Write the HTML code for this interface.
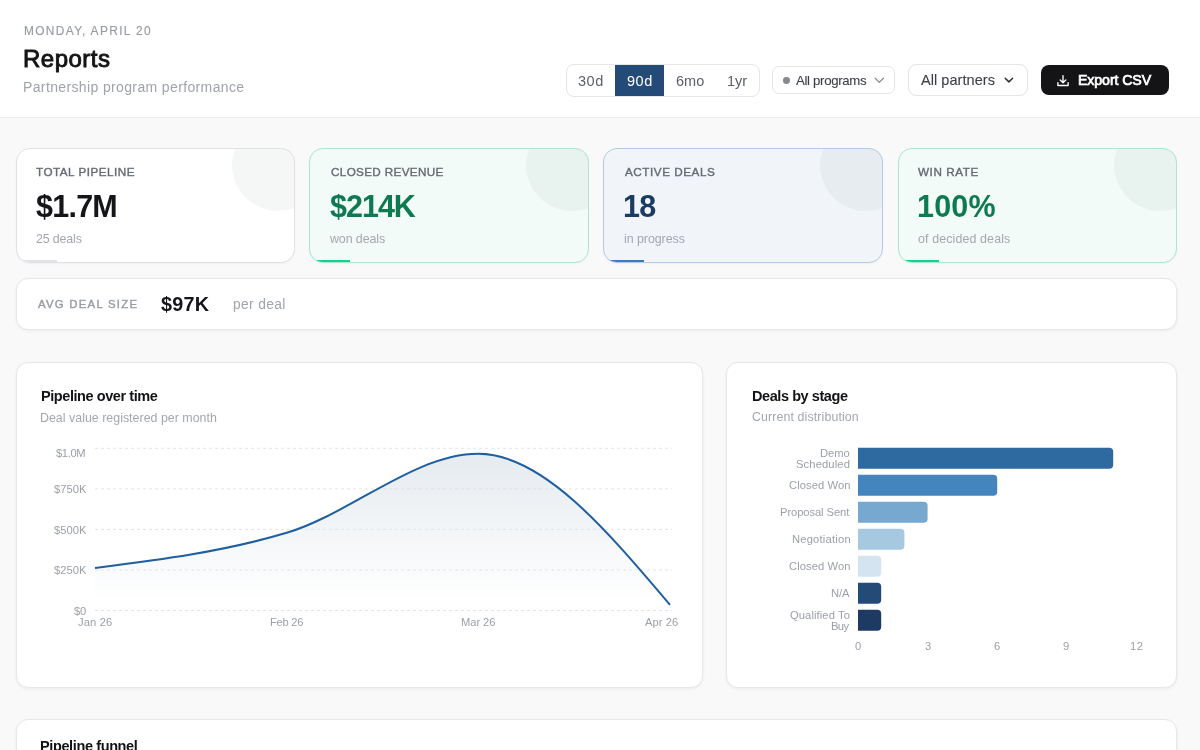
<!DOCTYPE html>
<html><head><meta charset="utf-8"><title>Reports</title>
<style>
html,body{margin:0;padding:0;}
body{width:1200px;height:750px;overflow:hidden;position:relative;background:#f9f9fa;font-family:"Liberation Sans",sans-serif;}
.abs{position:absolute;}
.t{position:absolute;white-space:nowrap;line-height:1;will-change:transform;}
.header{position:absolute;left:0;top:0;width:1200px;height:118px;background:#ffffff;border-bottom:1px solid #efeff1;box-sizing:border-box;}
.seg{position:absolute;left:565.5px;top:64.2px;width:194.5px;height:32.6px;border:1px solid #e4e6e9;border-radius:8px;box-sizing:border-box;background:#fff;overflow:hidden;}
.seg .on{position:absolute;left:48.6px;top:0;width:49.2px;height:100%;background:#244a78;}
.dd{position:absolute;border:1px solid #e4e6e9;background:#fff;box-sizing:border-box;}
.btn{position:absolute;left:1040.6px;top:64.9px;width:128.2px;height:30.6px;background:#141416;border-radius:8px;}
.kpi{position:absolute;top:147.8px;height:114.9px;border-radius:14px;box-sizing:border-box;border:1px solid #dfe1e5;overflow:hidden;background:#fff;box-shadow:0 1px 2px rgba(16,24,40,0.04);}
.kpi .circ{position:absolute;width:92px;height:92px;border-radius:50%;top:-30px;right:-30px;background:rgba(30,35,45,0.045);}
.kpi .bar{position:absolute;left:0;bottom:0;width:40px;height:2.2px;}
.card{position:absolute;background:#fff;border:1px solid #e5e7ea;box-sizing:border-box;box-shadow:0 1px 3px rgba(16,24,40,0.06);}
</style></head>
<body>
<div class="header"></div>
<div class="seg"><div class="on"></div></div>
<div class="dd" style="left:772.2px;top:66.4px;width:122.8px;height:28px;border-radius:7px;"></div>
<div class="abs" style="left:782.8px;top:77.4px;width:6.8px;height:6.8px;border-radius:50%;background:#85888e;"></div>
<div class="dd" style="left:908px;top:64.4px;width:120.4px;height:32.1px;border-radius:8px;"></div>
<div class="btn"></div>
<svg class="abs" style="left:0;top:0" width="1200" height="120"><path d="M875.2 78.3 L879.3 82.4 L883.4 78.2" fill="none" stroke="#8a8d93" stroke-width="1.3" stroke-linecap="round" stroke-linejoin="round"/><path d="M1005.2 78.3 L1008.9 81.9 L1012.6 78.3" fill="none" stroke="#2f3136" stroke-width="1.5" stroke-linecap="round" stroke-linejoin="round"/></svg>
<svg class="abs" style="left:1055px;top:73px" width="16" height="16" viewBox="0 0 16 16"><path d="M8 2.6 V9.6 M5.2 7 L8 9.8 L10.8 7 M2.9 9.6 V12.5 H13.1 V9.6" fill="none" stroke="#fff" stroke-width="1.35" stroke-linecap="round" stroke-linejoin="round"/></svg>

<div class="kpi" style="left:16px;width:279px;"><div class="circ"></div><div class="bar" style="background:#e1e3e7"></div></div>
<div class="kpi" style="left:309.3px;width:279.7px;background:#f2fbf7;border-color:#ace9ca;"><div class="circ"></div><div class="bar" style="background:#14d18e"></div></div>
<div class="kpi" style="left:603.2px;width:279.8px;background:#f1f5fa;border-color:#b3cce6;"><div class="circ"></div><div class="bar" style="background:#3b7bbf"></div></div>
<div class="kpi" style="left:897.5px;width:279.7px;background:#f2fbf7;border-color:#ace9ca;"><div class="circ"></div><div class="bar" style="background:#14d18e"></div></div>

<div class="card" style="left:16px;top:277.8px;width:1161px;height:52.4px;border-radius:12px;"></div>
<div class="card" style="left:16px;top:361.9px;width:687px;height:326px;border-radius:12px;"></div>
<div class="card" style="left:726.4px;top:361.9px;width:450.4px;height:326px;border-radius:12px;"></div>
<div class="card" style="left:16px;top:719.2px;width:1161px;height:200px;border-radius:12px;"></div>
<svg class="abs" width="1200" height="750" style="left:0;top:0">
<defs><linearGradient id="ag" gradientUnits="userSpaceOnUse" x1="0" y1="452" x2="0" y2="610.5">
<stop offset="0.05" stop-color="#d8e0e7" stop-opacity="0.62"/>
<stop offset="0.95" stop-color="#d8e0e7" stop-opacity="0"/>
</linearGradient></defs>
<g font-family="Liberation Sans" font-size="11.6" fill="#9ca0a8"><line x1="95.0" y1="448.30" x2="672.0" y2="448.30" stroke="#e3e5e9" stroke-width="1" stroke-dasharray="3 3"/><line x1="95.0" y1="488.85" x2="672.0" y2="488.85" stroke="#e3e5e9" stroke-width="1" stroke-dasharray="3 3"/><line x1="95.0" y1="529.40" x2="672.0" y2="529.40" stroke="#e3e5e9" stroke-width="1" stroke-dasharray="3 3"/><line x1="95.0" y1="569.95" x2="672.0" y2="569.95" stroke="#e3e5e9" stroke-width="1" stroke-dasharray="3 3"/><line x1="95.0" y1="610.50" x2="672.0" y2="610.50" stroke="#e3e5e9" stroke-width="1" stroke-dasharray="3 3"/></g>
<path d="M95.00,568.00C158.89,559.92,222.78,551.84,286.67,532.81C350.56,513.77,414.44,453.81,478.33,453.81C542.22,453.81,606.11,529.32,670.00,604.82L670.00,610.50L95.00,610.50Z" fill="url(#ag)" stroke="none"/>
<path d="M95.00,568.00C158.89,559.92,222.78,551.84,286.67,532.81C350.56,513.77,414.44,453.81,478.33,453.81C542.22,453.81,606.11,529.32,670.00,604.82" fill="none" stroke="#1f5f9f" stroke-width="2"/>
</svg>
<svg class="abs" width="1200" height="750" style="left:0;top:0">
<g font-family="Liberation Sans" font-size="11.6" fill="#9ca0a8"><path d="M858.0,447.7H1109.2Q1113.2,447.7 1113.2,451.7V464.7Q1113.2,468.7 1109.2,468.7H858.0Z" fill="#2e6aa0"/><path d="M858.0,474.7H993.2Q997.2,474.7 997.2,478.7V491.7Q997.2,495.7 993.2,495.7H858.0Z" fill="#4585be"/><path d="M858.0,501.7H923.6Q927.6,501.7 927.6,505.7V518.7Q927.6,522.7 923.6,522.7H858.0Z" fill="#77a8d0"/><path d="M858.0,528.7H900.4Q904.4,528.7 904.4,532.7V545.7Q904.4,549.7 900.4,549.7H858.0Z" fill="#a6c9e1"/><path d="M858.0,555.7H877.2Q881.2,555.7 881.2,559.7V572.7Q881.2,576.7 877.2,576.7H858.0Z" fill="#d4e4f1"/><path d="M858.0,582.7H877.2Q881.2,582.7 881.2,586.7V599.7Q881.2,603.7 877.2,603.7H858.0Z" fill="#244a78"/><path d="M858.0,609.7H877.2Q881.2,609.7 881.2,613.7V626.7Q881.2,630.7 877.2,630.7H858.0Z" fill="#1c3a62"/></g>
</svg>
<span id="date" class="t" style="left:23.50px;top:25.71px;font-size:11.9px;font-weight:400;color:#979ba3;letter-spacing:1.360px;-webkit-text-stroke:0.15px #979ba3;">MONDAY, APRIL 20</span>
<span id="title" class="t" style="left:22.80px;top:47.01px;font-size:24.0px;font-weight:400;color:#141416;letter-spacing:0.483px;-webkit-text-stroke:0.9px #141416;">Reports</span>
<span id="sub" class="t" style="left:23.10px;top:80.01px;font-size:14.0px;font-weight:400;color:#9fa3aa;letter-spacing:0.367px;">Partnership program performance</span>
<span id="s30" class="t" style="left:578.00px;top:73.50px;font-size:14.5px;font-weight:400;color:#5d6068;letter-spacing:0.500px;">30d</span>
<span id="s90" class="t" style="left:627.00px;top:73.50px;font-size:14.5px;font-weight:400;color:#ffffff;letter-spacing:0.500px;">90d</span>
<span id="s6" class="t" style="left:676.00px;top:73.50px;font-size:14.5px;font-weight:400;color:#5d6068;letter-spacing:0.000px;">6mo</span>
<span id="s1" class="t" style="left:727.00px;top:73.50px;font-size:14.5px;font-weight:400;color:#5d6068;letter-spacing:0.000px;">1yr</span>
<span id="dd1" class="t" style="left:796.00px;top:73.90px;font-size:13.2px;font-weight:400;color:#3d4047;letter-spacing:-0.318px;-webkit-text-stroke:0.1px #3d4047;">All programs</span>
<span id="dd2" class="t" style="left:920.80px;top:73.41px;font-size:14.5px;font-weight:400;color:#3d4047;letter-spacing:0.055px;-webkit-text-stroke:0.1px #3d4047;">All partners</span>
<span id="exp" class="t" style="left:1078.00px;top:73.31px;font-size:14.2px;font-weight:400;color:#ffffff;letter-spacing:-0.111px;-webkit-text-stroke:0.7px #ffffff;">Export CSV</span>
<span id="kl0" class="t" style="left:35.80px;top:166.31px;font-size:11.7px;font-weight:400;color:#676b73;letter-spacing:0.500px;-webkit-text-stroke:0.4px #676b73;">TOTAL PIPELINE</span>
<span id="kv0" class="t" style="left:35.90px;top:191.40px;font-size:30.5px;font-weight:700;color:#16161a;letter-spacing:-0.750px;">$1.7M</span>
<span id="ks0" class="t" style="left:35.90px;top:232.72px;font-size:12.4px;font-weight:400;color:#a4a7ad;letter-spacing:-0.143px;">25 deals</span>
<span id="kl1" class="t" style="left:330.60px;top:166.31px;font-size:11.7px;font-weight:400;color:#676b73;letter-spacing:0.346px;-webkit-text-stroke:0.4px #676b73;">CLOSED REVENUE</span>
<span id="kv1" class="t" style="left:329.80px;top:191.40px;font-size:30.5px;font-weight:700;color:#0d7a52;letter-spacing:-1.000px;">$214K</span>
<span id="ks1" class="t" style="left:329.80px;top:232.72px;font-size:12.4px;font-weight:400;color:#a4a7ad;letter-spacing:-0.075px;">won deals</span>
<span id="kl2" class="t" style="left:625.00px;top:166.31px;font-size:11.7px;font-weight:400;color:#676b73;letter-spacing:0.545px;-webkit-text-stroke:0.4px #676b73;">ACTIVE DEALS</span>
<span id="kv2" class="t" style="left:623.00px;top:191.41px;font-size:30.5px;font-weight:700;color:#1b3b63;letter-spacing:-0.600px;">18</span>
<span id="ks2" class="t" style="left:623.50px;top:232.72px;font-size:12.4px;font-weight:400;color:#a4a7ad;letter-spacing:-0.040px;">in progress</span>
<span id="kl3" class="t" style="left:918.30px;top:166.31px;font-size:11.7px;font-weight:400;color:#676b73;letter-spacing:0.571px;-webkit-text-stroke:0.4px #676b73;">WIN RATE</span>
<span id="kv3" class="t" style="left:916.90px;top:191.40px;font-size:30.5px;font-weight:700;color:#0d7a52;letter-spacing:0.200px;">100%</span>
<span id="ks3" class="t" style="left:917.90px;top:232.72px;font-size:12.4px;font-weight:400;color:#a4a7ad;letter-spacing:0.133px;">of decided deals</span>
<span id="avl" class="t" style="left:37.50px;top:299.20px;font-size:11.4px;font-weight:400;color:#989ca5;letter-spacing:1.233px;-webkit-text-stroke:0.4px #989ca5;">AVG DEAL SIZE</span>
<span id="avv" class="t" style="left:161.40px;top:294.80px;font-size:19.8px;font-weight:700;color:#16161a;letter-spacing:0.267px;">$97K</span>
<span id="avs" class="t" style="left:233.40px;top:298.00px;font-size:13.8px;font-weight:400;color:#a0a4ac;letter-spacing:0.343px;">per deal</span>
<span id="c1t" class="t" style="left:40.60px;top:389.21px;font-size:14.5px;font-weight:700;color:#131316;letter-spacing:-0.429px;">Pipeline over time</span>
<span id="c1s" class="t" style="left:39.60px;top:412.00px;font-size:12.4px;font-weight:400;color:#a3a7ae;letter-spacing:0.017px;">Deal value registered per month</span>
<span id="c2t" class="t" style="left:751.60px;top:389.00px;font-size:14.5px;font-weight:700;color:#131316;letter-spacing:-0.431px;">Deals by stage</span>
<span id="c2s" class="t" style="left:751.60px;top:411.31px;font-size:12.4px;font-weight:400;color:#a3a7ae;letter-spacing:0.105px;">Current distribution</span>
<span id="c3t" class="t" style="left:40.00px;top:738.50px;font-size:14.5px;font-weight:700;color:#131316;letter-spacing:-0.379px;">Pipeline funnel</span>
<span id="y0" class="t" style="left:56.40px;top:447.81px;font-size:11.2px;font-weight:400;color:#9ca0a8;letter-spacing:-0.375px;">$1.0M</span>
<span id="y1" class="t" style="left:54.40px;top:484.20px;font-size:11.2px;font-weight:400;color:#9ca0a8;letter-spacing:0.000px;">$750K</span>
<span id="y2" class="t" style="left:54.40px;top:524.50px;font-size:11.2px;font-weight:400;color:#9ca0a8;letter-spacing:0.000px;">$500K</span>
<span id="y3" class="t" style="left:54.40px;top:564.81px;font-size:11.2px;font-weight:400;color:#9ca0a8;letter-spacing:0.000px;">$250K</span>
<span id="y4" class="t" style="left:73.50px;top:605.60px;font-size:11.2px;font-weight:400;color:#9ca0a8;letter-spacing:-0.300px;">$0</span>
<span id="x0" class="t" style="left:77.80px;top:617.00px;font-size:11.2px;font-weight:400;color:#9ca0a8;letter-spacing:0.120px;">Jan 26</span>
<span id="x1" class="t" style="left:269.80px;top:617.00px;font-size:11.2px;font-weight:400;color:#9ca0a8;letter-spacing:-0.280px;">Feb 26</span>
<span id="x2" class="t" style="left:461.00px;top:617.00px;font-size:11.2px;font-weight:400;color:#9ca0a8;letter-spacing:-0.080px;">Mar 26</span>
<span id="x3" class="t" style="left:644.60px;top:617.00px;font-size:11.2px;font-weight:400;color:#9ca0a8;letter-spacing:0.040px;">Apr 26</span>
<span id="b0a" class="t" style="left:820.00px;top:448.00px;font-size:11.2px;font-weight:400;color:#9ca0a8;letter-spacing:0.000px;">Demo</span>
<span id="b0b" class="t" style="left:796.00px;top:458.61px;font-size:11.2px;font-weight:400;color:#9ca0a8;letter-spacing:0.125px;">Scheduled</span>
<span id="b1" class="t" style="left:789.40px;top:480.31px;font-size:11.2px;font-weight:400;color:#9ca0a8;letter-spacing:0.089px;">Closed Won</span>
<span id="b2" class="t" style="left:780.00px;top:507.31px;font-size:11.2px;font-weight:400;color:#9ca0a8;letter-spacing:-0.083px;">Proposal Sent</span>
<span id="b3" class="t" style="left:792.00px;top:534.31px;font-size:11.2px;font-weight:400;color:#9ca0a8;letter-spacing:0.200px;">Negotiation</span>
<span id="b4" class="t" style="left:789.40px;top:561.31px;font-size:11.2px;font-weight:400;color:#9ca0a8;letter-spacing:0.089px;">Closed Won</span>
<span id="b5" class="t" style="left:831.40px;top:588.31px;font-size:11.2px;font-weight:400;color:#9ca0a8;letter-spacing:-0.100px;">N/A</span>
<span id="b6a" class="t" style="left:790.00px;top:610.00px;font-size:11.2px;font-weight:400;color:#9ca0a8;letter-spacing:0.091px;">Qualified To</span>
<span id="b6b" class="t" style="left:831.40px;top:620.61px;font-size:11.2px;font-weight:400;color:#9ca0a8;letter-spacing:-0.600px;">Buy</span>
<span id="bx0" class="t" style="left:854.75px;top:640.82px;font-size:11.2px;font-weight:400;color:#9ca0a8;letter-spacing:0.000px;">0</span>
<span id="bx1" class="t" style="left:924.55px;top:640.82px;font-size:11.2px;font-weight:400;color:#9ca0a8;letter-spacing:0.000px;">3</span>
<span id="bx2" class="t" style="left:994.35px;top:640.82px;font-size:11.2px;font-weight:400;color:#9ca0a8;letter-spacing:0.000px;">6</span>
<span id="bx3" class="t" style="left:1063.15px;top:640.82px;font-size:11.2px;font-weight:400;color:#9ca0a8;letter-spacing:0.000px;">9</span>
<span id="bx4" class="t" style="left:1129.80px;top:640.81px;font-size:11.2px;font-weight:400;color:#9ca0a8;letter-spacing:0.500px;">12</span>
</body></html>
